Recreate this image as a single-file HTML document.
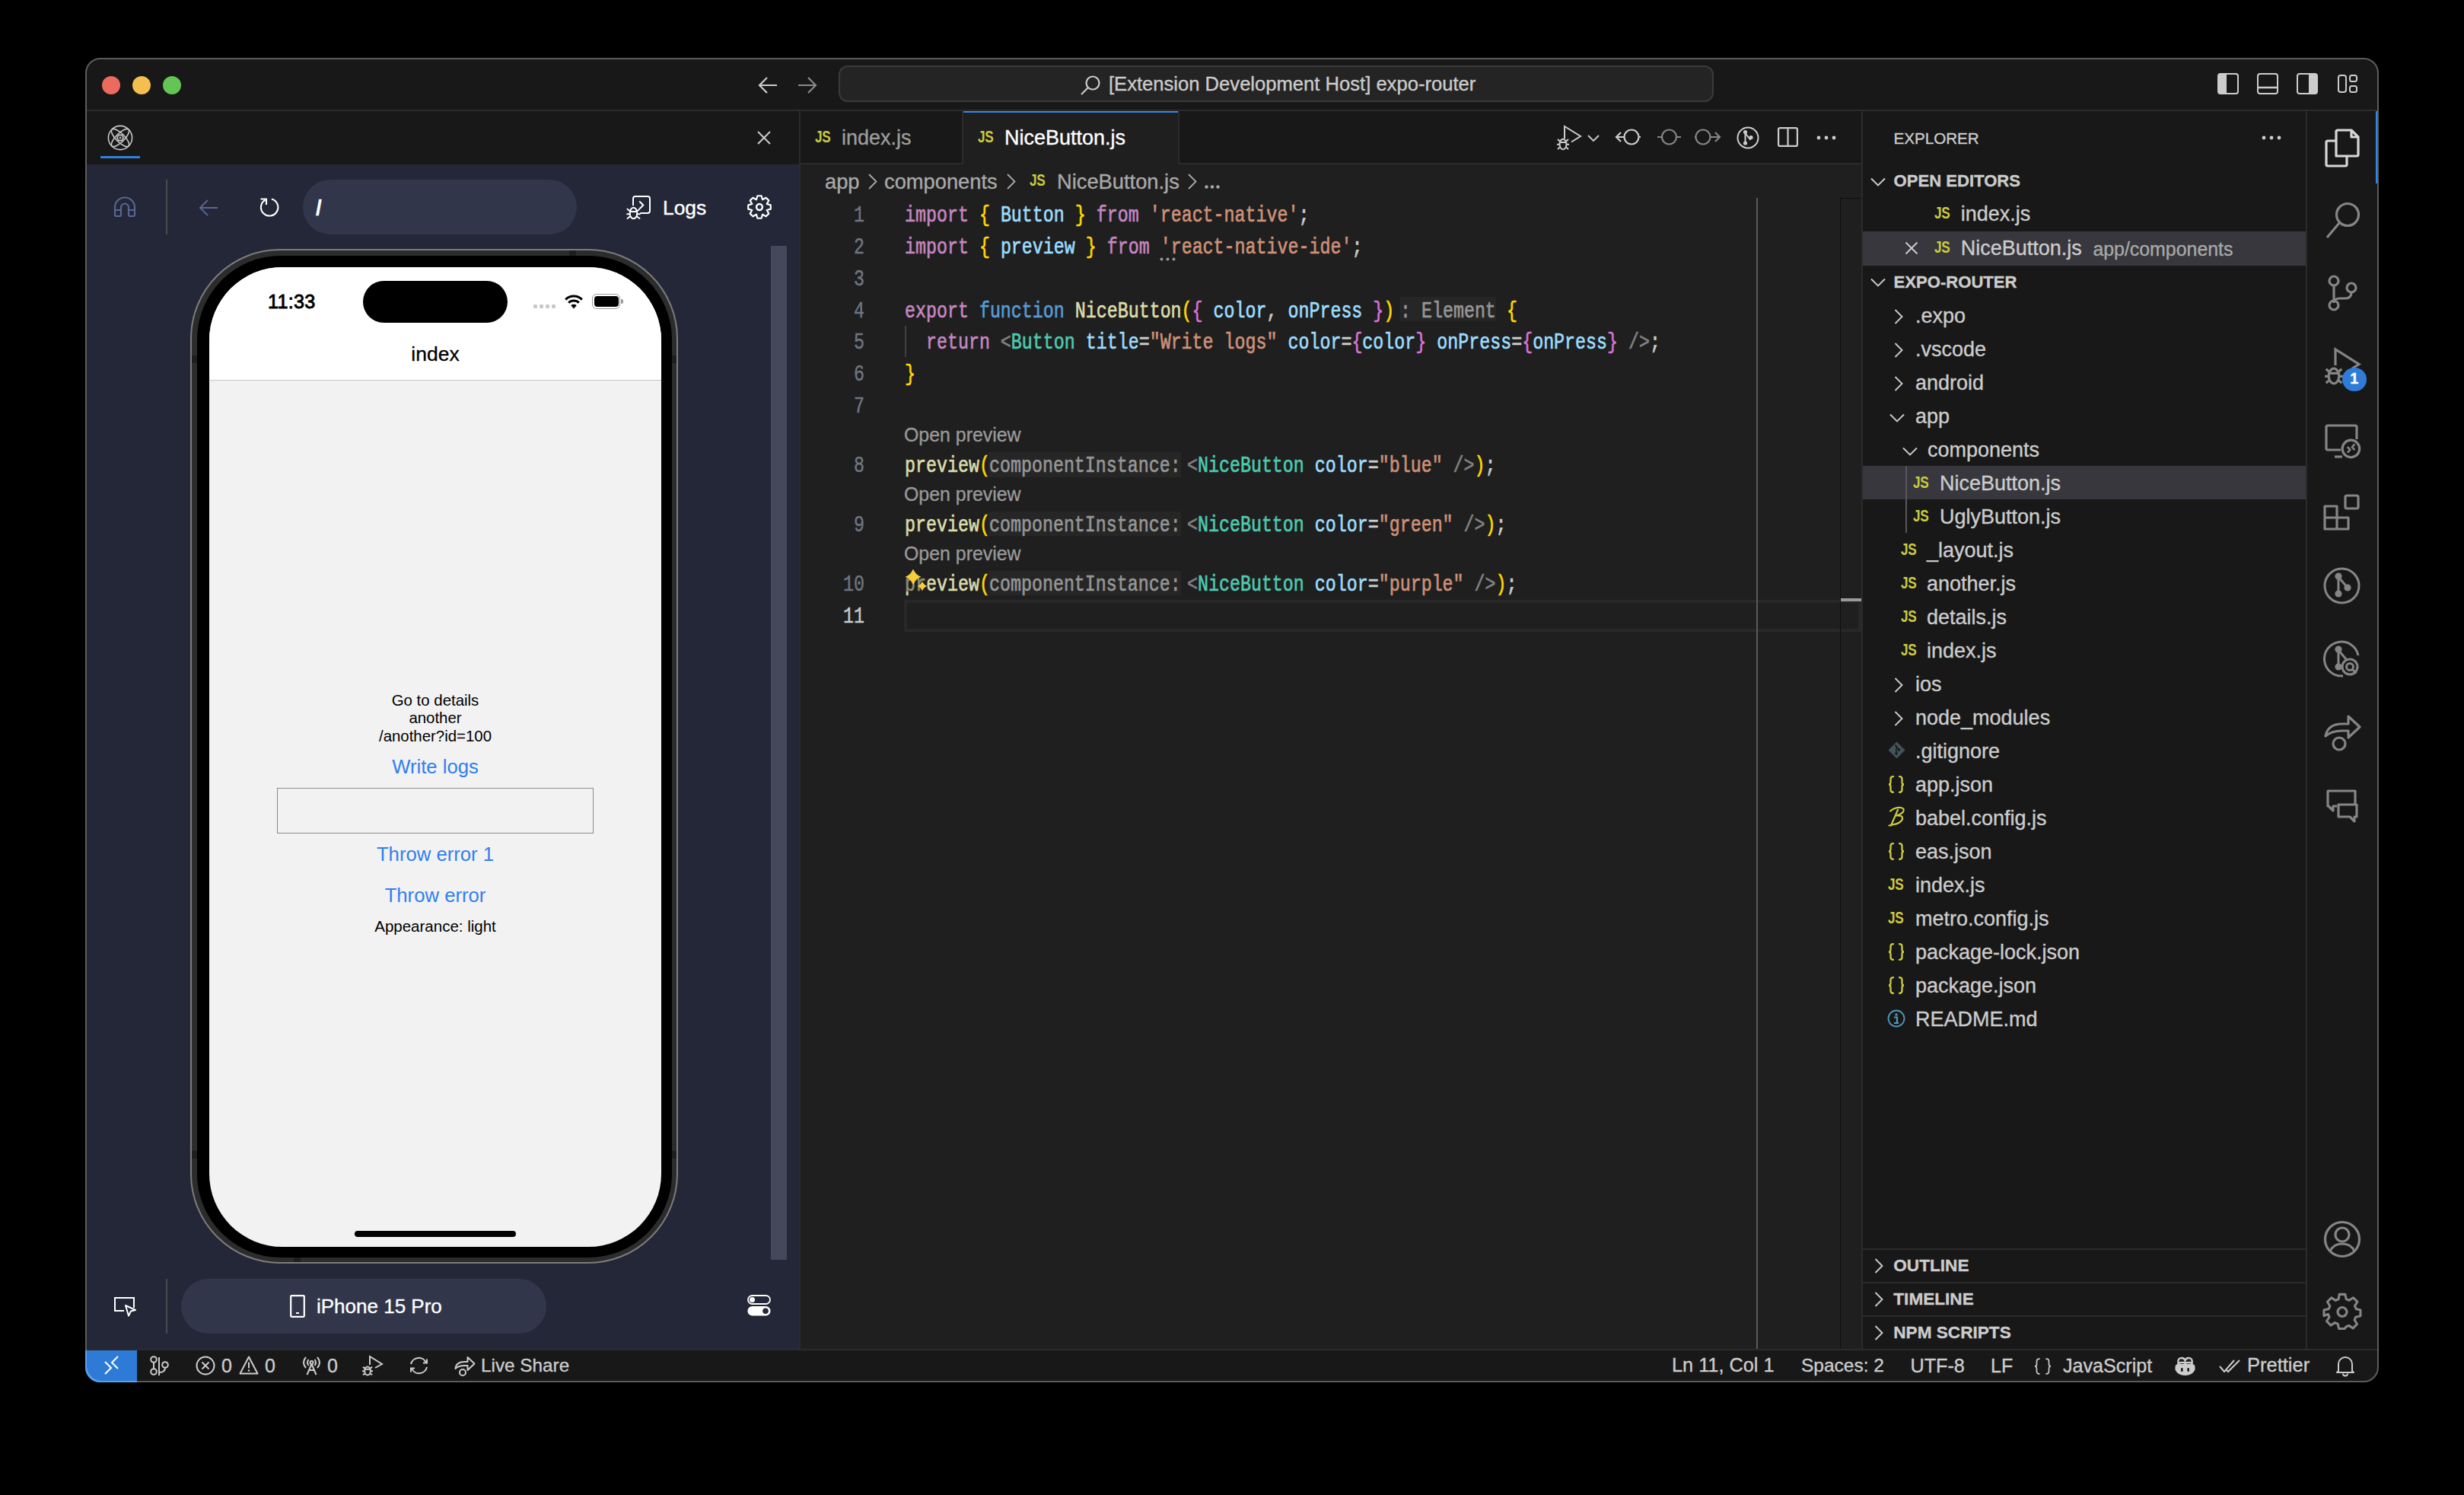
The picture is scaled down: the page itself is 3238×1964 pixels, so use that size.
<!DOCTYPE html>
<html><head><meta charset="utf-8">
<style>
html,body{margin:0;padding:0;}
body{width:3238px;height:1964px;background:#000;position:relative;overflow:hidden;font-family:"Liberation Sans",sans-serif;}
.a{position:absolute;}
.t{position:absolute;white-space:pre;line-height:1;-webkit-text-stroke:0.35px currentColor;}
#clip{position:absolute;left:0;top:0;width:3238px;height:1964px;clip-path:inset(76px 112px 148px 112px round 20px);}
svg{position:absolute;overflow:visible;}
.mono{font-family:"Liberation Mono",monospace;}
.code{position:absolute;left:1189px;white-space:pre;font-family:"Liberation Mono",monospace;font-size:30px;line-height:1;transform-origin:0 0;transform:scaleX(0.7767);-webkit-text-stroke:0.7px currentColor;}
.ln{position:absolute;width:100px;left:1036px;text-align:right;font-family:"Liberation Mono",monospace;font-size:30px;line-height:1;color:#6e7681;transform-origin:100% 0;transform:scaleX(0.7767);-webkit-text-stroke:0.5px currentColor;}
.kw{color:#c586c0}.br1{color:#ffd700}.br2{color:#da70d6}.vr{color:#9cdcfe}.st{color:#ce9178}.fn{color:#dcdcaa}.bl{color:#569cd6}.tg{color:#4ec9b0}.pu{color:#808080}.df{color:#cccccc}
.hint{background:#262626;color:#969696;}
.ex{position:absolute;font-size:25.5px;color:#cccccc;white-space:pre;line-height:1;}
.js{position:absolute;font-weight:700;color:#cbcb41;font-size:19px;letter-spacing:-0.5px;line-height:1;}
</style></head>
<body>
<div id="clip">
  <!-- window base -->
  <div class="a" style="left:112px;top:76px;width:3014px;height:1740px;background:#181818;"></div>
  <!-- title bar separator -->
  <div class="a" style="left:112px;top:144px;width:3014px;height:2px;background:#2b2b2b;"></div>
  <!-- traffic lights -->
  <div class="a" style="left:134px;top:100px;width:24px;height:24px;border-radius:50%;background:#ed6a5e;"></div>
  <div class="a" style="left:174px;top:100px;width:24px;height:24px;border-radius:50%;background:#f5bf4f;"></div>
  <div class="a" style="left:214px;top:100px;width:24px;height:24px;border-radius:50%;background:#62c554;"></div>
  <!-- nav arrows -->
  <svg style="left:996px;top:100px" width="26" height="24" viewBox="0 0 26 24"><path d="M25 12H2M12 2L2 12l10 10" fill="none" stroke="#cccccc" stroke-width="2.2"/></svg>
  <svg style="left:1048px;top:100px" width="26" height="24" viewBox="0 0 26 24"><path d="M1 12h23M14 2l10 10-10 10" fill="none" stroke="#8a8a8a" stroke-width="2.2"/></svg>
  <!-- search box -->
  <div class="a" style="left:1102px;top:86px;width:1150px;height:48px;box-sizing:border-box;border:2px solid #3a3a3a;border-radius:12px;background:#242424;"></div>
  <svg style="left:1420px;top:99px" width="26" height="26" viewBox="0 0 26 26"><circle cx="16" cy="10" r="8.5" fill="none" stroke="#cccccc" stroke-width="2.2"/><path d="M10 16L1 25" stroke="#cccccc" stroke-width="2.2"/></svg>
  <div class="t" style="left:1457px;top:98px;font-size:25.6px;color:#cccccc;">[Extension Development Host] expo-router</div>
  <!-- layout icons -->
  <svg style="left:2914px;top:96px" width="28" height="28" viewBox="0 0 28 28"><rect x="1" y="1" width="26" height="26" rx="3" fill="none" stroke="#cccccc" stroke-width="2"/><path d="M1 4a3 3 0 0 1 3-3h8v26H4a3 3 0 0 1-3-3z" fill="#cccccc"/></svg>
  <svg style="left:2966px;top:96px" width="28" height="28" viewBox="0 0 28 28"><rect x="1" y="1" width="26" height="26" rx="3" fill="none" stroke="#cccccc" stroke-width="2"/><path d="M1 19h26" stroke="#cccccc" stroke-width="2.4"/></svg>
  <svg style="left:3018px;top:96px" width="28" height="28" viewBox="0 0 28 28"><rect x="1" y="1" width="26" height="26" rx="3" fill="none" stroke="#cccccc" stroke-width="2"/><path d="M16 1h8a3 3 0 0 1 3 3v20a3 3 0 0 1-3 3h-8z" fill="#cccccc"/></svg>
  <svg style="left:3072px;top:98px" width="26" height="24" viewBox="0 0 26 24"><rect x="1" y="1" width="10" height="22" rx="3" fill="none" stroke="#cccccc" stroke-width="2"/><rect x="16" y="1" width="9" height="8" rx="2.5" fill="none" stroke="#cccccc" stroke-width="2"/><rect x="16" y="15" width="9" height="8" rx="2.5" fill="none" stroke="#cccccc" stroke-width="2"/></svg>

  <!-- ============ LEFT PANEL ============ -->
  <div id="leftpanel">
  <div class="a" style="left:112px;top:216px;width:938px;height:1556px;background:#242737;"></div>
  <div class="a" style="left:1050px;top:146px;width:2px;height:1626px;background:#2b2b2b;"></div>
  <!-- atom tab icon -->
  <svg style="left:141px;top:164px" width="34" height="34" viewBox="0 0 34 34"><g fill="none" stroke="#c8c8c8" stroke-width="1.6"><circle cx="17" cy="17" r="15.6"/><ellipse cx="17" cy="17" rx="15.4" ry="5.6" transform="rotate(45 17 17)"/><ellipse cx="17" cy="17" rx="15.4" ry="5.6" transform="rotate(-45 17 17)"/><path d="M21.20 17.00 L19.10 20.64 L14.90 20.64 L12.80 17.00 L14.90 13.36 L19.10 13.36Z"/></g><rect x="15.8" y="15.8" width="2.4" height="2.4" fill="#c8c8c8"/></svg>
  <div class="a" style="left:132px;top:205px;width:52px;height:2.5px;background:#2f7fde;"></div>
  <svg style="left:995px;top:172px" width="18" height="18" viewBox="0 0 18 18"><path d="M1 1l16 16M17 1L1 17" stroke="#cccccc" stroke-width="2"/></svg>
  <!-- toolbar -->
  <svg style="left:149px;top:258px" width="30" height="28" viewBox="0 0 30 28"><g fill="none" stroke="#5a6592" stroke-width="2.2" stroke-linejoin="round"><path d="M2 24V14.5a13 13 0 0 1 26 0V24q0 2-2 2h-4q-2 0-2-2V14.5a5 5 0 0 0-10 0V24q0 2-2 2H4q-2 0-2-2z"/><path d="M2 18h8M20 18h8"/></g></svg>
  <div class="a" style="left:218px;top:236px;width:2px;height:72px;background:#4a4a4c;"></div>
  <svg style="left:262px;top:262px" width="25" height="22" viewBox="0 0 25 22"><path d="M24 11H2M11 1L1 11l10 10" fill="none" stroke="#5a6592" stroke-width="2"/></svg>
  <svg style="left:340px;top:259px" width="28" height="27" viewBox="0 0 28 27"><g fill="none" stroke="#ffffff" stroke-width="2.1"><path d="M16.9 2.48A11.2 11.2 0 1 1 8.6 3.6"/><path d="M2.5 2.5H10V10"/></g></svg>
  <div class="a" style="left:398px;top:236px;width:360px;height:72px;border-radius:36px;background:#31364b;"></div>
  <div class="t" style="left:415px;top:259px;font-size:28px;color:#ffffff;font-weight:700;">/</div>
  <svg style="left:823px;top:256px" width="34" height="34" viewBox="0 0 34 34"><g fill="none" stroke="#ffffff" stroke-width="2" stroke-linecap="round"><path d="M9 13.5V5a3 3 0 0 1 3-3h16a3 3 0 0 1 3 3v16a3 3 0 0 1-3 3H19"/><path d="M17.8 9l4.5 4.5-4.5 4.5"/><ellipse cx="9.5" cy="24" rx="4.8" ry="7.3"/><path d="M5 22h9M1.5 18.7L4.8 21.2M16.8 19.3L14.3 21.2M1.2 25.2h3.6M14.2 25.2h3.6M1.5 31L4.8 28.5M17.5 31L14.2 28.5"/></g></svg>
  <div class="t" style="left:871px;top:260px;font-size:26.4px;color:#ffffff;font-weight:400;-webkit-text-stroke:0.4px #fff;">Logs</div>
  <svg style="left:981px;top:255px" width="34" height="34" viewBox="0 0 34 34"><g fill="none" stroke="#ffffff" stroke-width="2.2" stroke-linejoin="round"><path d="M14.40 2.23 L19.60 2.23 L21.02 7.30 L25.60 4.71 L29.29 8.40 L26.70 12.98 L31.77 14.40 L31.77 19.60 L26.70 21.02 L29.29 25.60 L25.60 29.29 L21.02 26.70 L19.60 31.77 L14.40 31.77 L12.98 26.70 L8.40 29.29 L4.71 25.60 L7.30 21.02 L2.23 19.60 L2.23 14.40 L7.30 12.98 L4.71 8.40 L8.40 4.71 L12.98 7.30Z"/><circle cx="17" cy="17" r="3.9" stroke-width="2.5"/></g></svg>
  <!-- scrollbar -->
  <div class="a" style="left:1013px;top:323px;width:21px;height:1332px;background:#45475a;"></div>
  <!-- phone -->
  <div class="a" style="left:250px;top:327px;width:641px;height:1333px;box-sizing:border-box;border-radius:118px;background:#2c2c2c;border:2px solid #7c7c7c;"></div>
  <div class="a" style="left:252px;top:467px;width:7px;height:10px;background:#1e1e1e;"></div>
  <div class="a" style="left:252px;top:1512px;width:7px;height:10px;background:#1e1e1e;"></div>
  <div class="a" style="left:883px;top:467px;width:6px;height:10px;background:#1e1e1e;"></div>
  <div class="a" style="left:883px;top:1512px;width:6px;height:10px;background:#1e1e1e;"></div>
  <div class="a" style="left:748px;top:329px;width:9px;height:7px;background:#1e1e1e;"></div>
  <div class="a" style="left:386px;top:1652px;width:9px;height:6px;background:#1e1e1e;"></div>
  <div class="a" style="left:259px;top:336px;width:624px;height:1316px;border-radius:110px;background:#000;"></div>
  <div class="a" style="left:275px;top:351px;width:594px;height:1287px;border-radius:96px;background:#f2f2f2;overflow:hidden;">
    <div class="a" style="left:0;top:0;width:594px;height:148px;background:#ffffff;border-bottom:1.5px solid #c6c6c6;"></div>
    <div class="a" style="left:202px;top:18px;width:190px;height:55px;border-radius:28px;background:#000;"></div>
    <div class="t" style="left:77px;top:33px;font-size:25.2px;font-weight:400;color:#000;-webkit-text-stroke:0.9px #000;letter-spacing:0.3px;">11:33</div>
    <div class="a" style="left:426px;top:49px;width:5px;height:5px;border-radius:1.5px;background:#c8c8c8;"></div>
    <div class="a" style="left:434px;top:49px;width:5px;height:5px;border-radius:1.5px;background:#c8c8c8;"></div>
    <div class="a" style="left:442px;top:49px;width:5px;height:5px;border-radius:1.5px;background:#c8c8c8;"></div>
    <div class="a" style="left:450px;top:49px;width:5px;height:5px;border-radius:1.5px;background:#c8c8c8;"></div>
    <svg style="left:466px;top:35px" width="26" height="20" viewBox="0 0 26 20"><path d="M13 19.5l-3.7-4.3a5.5 5.5 0 0 1 7.4 0z" fill="#000"/><path d="M6.2 11.8a9.5 9.5 0 0 1 13.6 0M2.2 7.6a15 15 0 0 1 21.6 0" fill="none" stroke="#000" stroke-width="3"/></svg>
    <div class="a" style="left:503px;top:35px;width:37px;height:20px;box-sizing:border-box;border:1.5px solid #9a9a9a;border-radius:6px;"></div>
    <div class="a" style="left:506px;top:38px;width:32px;height:14px;border-radius:4px;background:#000;"></div>
    <div class="a" style="left:541px;top:42px;width:3px;height:6px;border-radius:0 2px 2px 0;background:#9a9a9a;"></div>
    <div class="t" style="left:0;width:594px;text-align:center;top:101px;font-size:26.5px;color:#000;-webkit-text-stroke:0.3px #000;">index</div>
    <div class="t" style="left:0;width:594px;text-align:center;top:558px;font-size:20.4px;-webkit-text-stroke:0;color:#000;line-height:23.4px;">Go to details
another
/another?id=100</div>
    <div class="t" style="left:0;width:594px;text-align:center;top:644px;font-size:25.7px;-webkit-text-stroke:0;color:#2f7ff0;">Write logs</div>
    <div class="a" style="left:89px;top:684px;width:416px;height:60px;box-sizing:border-box;border:1.5px solid #8c8c8c;"></div>
    <div class="t" style="left:0;width:594px;text-align:center;top:759px;font-size:25.7px;-webkit-text-stroke:0;color:#2f7ff0;">Throw error 1</div>
    <div class="t" style="left:0;width:594px;text-align:center;top:813px;font-size:25.7px;-webkit-text-stroke:0;color:#2f7ff0;">Throw error</div>
    <div class="t" style="left:0;width:594px;text-align:center;top:856px;font-size:20.5px;-webkit-text-stroke:0;color:#000;">Appearance: light</div>
    <div class="a" style="left:191px;top:1266px;width:212px;height:8px;border-radius:4px;background:#000;"></div>
  </div>
  <!-- bottom toolbar -->
  <svg style="left:149px;top:1703px" width="32" height="29" viewBox="0 0 32 29"><g fill="none" stroke="#ffffff" stroke-width="2"><path d="M14 19H2V2h25v13"/><path d="M16 12l13 6-6 1.5-3 6z" stroke-linejoin="round"/></g></svg>
  <div class="a" style="left:218px;top:1680px;width:2px;height:72px;background:#4a4a4c;"></div>
  <div class="a" style="left:238px;top:1680px;width:480px;height:72px;border-radius:36px;background:#31364b;"></div>
  <svg style="left:381px;top:1701px" width="20" height="30" viewBox="0 0 20 30"><rect x="1.2" y="1.2" width="17.6" height="27.6" rx="1" fill="none" stroke="#ffffff" stroke-width="2.2"/><path d="M8 24h4" stroke="#fff" stroke-width="2"/></svg>
  <div class="t" style="left:416px;top:1703px;font-size:26px;color:#ffffff;">iPhone 15 Pro</div>
  <svg style="left:982px;top:1701px" width="31" height="28" viewBox="0 0 31 28"><rect x="1" y="1" width="29" height="11" rx="5.5" fill="none" stroke="#fff" stroke-width="1.8"/><circle cx="6.5" cy="6.5" r="3.5" fill="#fff"/><rect x="0.5" y="15" width="30" height="12.5" rx="6.2" fill="#fff"/><circle cx="24" cy="21.2" r="3.8" fill="#242737"/></svg>
  </div>

  <!-- ============ EDITOR ============ -->
  <div id="editor">
  <div class="a" style="left:1052px;top:215px;width:1395px;height:1557px;background:#1f1f1f;"></div>
  <div class="a" style="left:1052px;top:214px;width:1395px;height:2px;background:#2b2b2b;"></div>
  <div class="a" style="left:2446px;top:146px;width:2px;height:1626px;background:#2b2b2b;"></div>
  <!-- tabs -->
  <div class="a" style="left:1264px;top:146px;width:2px;height:69px;background:#2b2b2b;"></div>
  <div class="a" style="left:1266px;top:146px;height:70px;background:#1f1f1f;width:282px;"></div>
  <div class="a" style="left:1266px;top:146px;width:282px;height:2px;background:#3388e6;"></div>
  <div class="a" style="left:1548px;top:146px;width:2px;height:69px;background:#2b2b2b;"></div>
  <div class="js" style="left:1071px;top:169.7px;font-size:21.5px;transform:scaleX(0.8);transform-origin:0 0;">JS</div>
  <div class="t" style="left:1106px;top:167.6px;font-size:27px;color:#9d9d9d;">index.js</div>
  <div class="js" style="left:1285px;top:169.7px;font-size:21.5px;transform:scaleX(0.8);transform-origin:0 0;">JS</div>
  <div class="t" style="left:1320px;top:167.6px;font-size:27px;color:#ffffff;">NiceButton.js</div>
  <!-- editor actions -->
  <svg style="left:2045px;top:165px" width="34" height="33" viewBox="0 0 34 33"><g fill="none" stroke="#cccccc" stroke-width="2"><path d="M11 17V1l21 13-12 7.5"/><ellipse cx="9" cy="24.5" rx="4.5" ry="6.8"/><path d="M4.5 21.916h9.0M1.98 18.04L4.8 20.42M16.02 18.04L13.2 20.42M0.8999999999999999 24.8h3.6M13.5 24.8h3.6M1.98 30.96L4.8 28.58M16.02 30.96L13.2 28.58"/></g></svg>
  <svg style="left:2086px;top:177px" width="16" height="10" viewBox="0 0 16 10"><path d="M1 1l7 7 7-7" fill="none" stroke="#cccccc" stroke-width="1.8"/></svg>
  <svg style="left:2123px;top:169px" width="34" height="22" viewBox="0 0 34 22"><g fill="none" stroke="#cccccc" stroke-width="2.2"><circle cx="21" cy="11" r="9.5"/><path d="M11.5 11H1M7 5l-6 6 6 6M30.5 11H33"/></g></svg>
  <svg style="left:2178px;top:169px" width="31" height="22" viewBox="0 0 31 22"><g fill="none" stroke="#858585" stroke-width="2.2"><circle cx="15.5" cy="11" r="9.5"/><path d="M0 11h6M25 11h6"/></g></svg>
  <svg style="left:2227px;top:169px" width="34" height="22" viewBox="0 0 34 22"><g fill="none" stroke="#858585" stroke-width="2.2"><circle cx="11" cy="11" r="9.5"/><path d="M20.5 11H32M27 5l6 6-6 6M0 11h1.5"/></g></svg>
  <svg style="left:2282px;top:166px" width="30" height="30" viewBox="0 0 30 30"><g fill="none" stroke="#cccccc" stroke-width="2"><circle cx="15" cy="15" r="13.5"/><path d="M11.5 8v14M11.5 9l7 9"/></g><circle cx="11.5" cy="7.5" r="2.6" fill="#cccccc"/><circle cx="11.5" cy="22" r="2.6" fill="#cccccc"/><circle cx="19" cy="14.5" r="2.6" fill="#cccccc"/></svg>
  <svg style="left:2336px;top:167px" width="27" height="26" viewBox="0 0 27 26"><g fill="none" stroke="#cccccc" stroke-width="2.2"><rect x="1.1" y="1.1" width="24.8" height="23.8" rx="2"/><path d="M13.5 1v24"/></g></svg>
  <svg style="left:2387px;top:178px" width="26" height="6" viewBox="0 0 26 6"><g fill="#cccccc"><circle cx="3" cy="3" r="2.4"/><circle cx="13" cy="3" r="2.4"/><circle cx="23" cy="3" r="2.4"/></g></svg>
  <!-- breadcrumbs -->
  <div class="t" style="left:1084px;top:225px;font-size:27.3px;color:#a9a9a9;">app</div>
  <svg style="left:1141px;top:228px" width="12" height="21" viewBox="0 0 12 21"><path d="M1 1l9.5 9.5L1 20" fill="none" stroke="#a9a9a9" stroke-width="1.8"/></svg>
  <div class="t" style="left:1162px;top:225px;font-size:27.3px;color:#a9a9a9;">components</div>
  <svg style="left:1323px;top:228px" width="12" height="21" viewBox="0 0 12 21"><path d="M1 1l9.5 9.5L1 20" fill="none" stroke="#a9a9a9" stroke-width="1.8"/></svg>
  <div class="js" style="left:1353px;top:227px;font-size:21.5px;transform:scaleX(0.8);transform-origin:0 0;">JS</div>
  <div class="t" style="left:1389px;top:225px;font-size:27.3px;color:#a9a9a9;">NiceButton.js</div>
  <svg style="left:1561px;top:228px" width="12" height="21" viewBox="0 0 12 21"><path d="M1 1l9.5 9.5L1 20" fill="none" stroke="#a9a9a9" stroke-width="1.8"/></svg>
  <svg style="left:1583px;top:243px" width="20" height="5" viewBox="0 0 20 5"><g fill="#a9a9a9"><circle cx="2.5" cy="2.5" r="2.2"/><circle cx="10" cy="2.5" r="2.2"/><circle cx="17.5" cy="2.5" r="2.2"/></g></svg>
  <!-- ruler & minimap border -->
  <!-- current line -->
  <div class="a" style="left:1188px;top:788px;width:1258px;height:42px;box-sizing:border-box;border:4px solid #282828;"></div>
  <div class="a" style="left:2308px;top:260px;width:2px;height:1512px;background:#5a5a5a;"></div>
  <div class="a" style="left:2418px;top:260px;width:28px;height:1512px;border-left:1.5px solid #0e0e0e;border-top:1.5px solid #0e0e0e;box-sizing:border-box;"></div>
  <div class="a" style="left:2419px;top:786px;width:27px;height:4px;background:#9a9a9a;"></div>
  <!-- indent guide -->
  <div class="a" style="left:1189px;top:428px;width:2px;height:41px;background:#404040;"></div>
  <!-- line numbers -->
  <div class="ln" style="top:268.4px">1</div>
  <div class="ln" style="top:310.1px">2</div>
  <div class="ln" style="top:351.9px">3</div>
  <div class="ln" style="top:393.6px">4</div>
  <div class="ln" style="top:435.4px">5</div>
  <div class="ln" style="top:477.2px">6</div>
  <div class="ln" style="top:518.9px">7</div>
  <div class="ln" style="top:597.2px">8</div>
  <div class="ln" style="top:674.8px">9</div>
  <div class="ln" style="top:752.9px">10</div>
  <div class="ln" style="top:794.9px;color:#cccccc">11</div>
  <!-- code -->
  <div class="code" style="top:268.4px"><span class="kw">import</span> <span class="br1">{</span> <span class="vr">Button</span> <span class="br1">}</span> <span class="kw">from</span> <span class="st">'react-native'</span><span class="df">;</span></div>
  <div class="code" style="top:310.1px"><span class="kw">import</span> <span class="br1">{</span> <span class="vr">preview</span> <span class="br1">}</span> <span class="kw">from</span> <span class="st">'react-native-ide'</span><span class="df">;</span></div>
  <svg style="left:1524px;top:338px" width="21" height="5" viewBox="0 0 21 5"><g fill="#9a9a9a"><circle cx="2.5" cy="2.5" r="2"/><circle cx="10.5" cy="2.5" r="2"/><circle cx="18.5" cy="2.5" r="2"/></g></svg>
  <div class="code" style="top:393.6px"><span class="kw">export</span> <span class="bl">function</span> <span class="fn">NiceButton</span><span class="br1">(</span><span class="br2">{</span> <span class="vr">color</span><span class="df">,</span> <span class="vr">onPress</span> <span class="br2">}</span><span class="br1">)</span></div>
  <div class="a hint" style="left:1840px;top:390px;width:126px;height:32px;"></div>
  <div class="code" style="left:1840px;top:393.6px;color:#969696">: Element</div>
  <div class="code" style="left:1966px;top:393.6px"> <span class="br1">{</span></div>
  <div class="code" style="top:435.4px">  <span class="kw">return</span> <span class="pu">&lt;</span><span class="tg">Button</span> <span class="vr">title</span><span class="df">=</span><span class="st">"Write logs"</span> <span class="vr">color</span><span class="df">=</span><span class="br2">{</span><span class="vr">color</span><span class="br2">}</span> <span class="vr">onPress</span><span class="df">=</span><span class="br2">{</span><span class="vr">onPress</span><span class="br2">}</span> <span class="pu">/&gt;</span><span class="df">;</span></div>
  <div class="code" style="top:477.2px"><span class="br1">}</span></div>
  <div class="t" style="left:1188px;top:559px;font-size:24.9px;color:#999999;">Open preview</div>
  <div class="t" style="left:1188px;top:637.4px;font-size:24.9px;color:#999999;">Open preview</div>
  <div class="t" style="left:1188px;top:715.3px;font-size:24.9px;color:#999999;">Open preview</div>
  <div class="a hint" style="left:1299px;top:594px;width:253px;height:32.5px;"></div>
  <div class="a hint" style="left:1299px;top:671.6px;width:253px;height:32.5px;"></div>
  <div class="a hint" style="left:1299px;top:749.7px;width:253px;height:32.5px;"></div>
  <div class="code" style="top:597.2px"><span class="fn">preview</span><span class="br1">(</span></div>
  <div class="code" style="left:1300px;top:597.2px;color:#969696">componentInstance:</div>
  <div class="code" style="left:1560px;top:597.2px"><span class="pu">&lt;</span><span class="tg">NiceButton</span> <span class="vr">color</span><span class="df">=</span><span class="st">"blue"</span> <span class="pu">/&gt;</span><span class="br1">)</span><span class="df">;</span></div>
  <div class="code" style="top:674.8px"><span class="fn">preview</span><span class="br1">(</span></div>
  <div class="code" style="left:1300px;top:674.8px;color:#969696">componentInstance:</div>
  <div class="code" style="left:1560px;top:674.8px"><span class="pu">&lt;</span><span class="tg">NiceButton</span> <span class="vr">color</span><span class="df">=</span><span class="st">"green"</span> <span class="pu">/&gt;</span><span class="br1">)</span><span class="df">;</span></div>
  <div class="code" style="top:752.9px"><span class="fn">preview</span><span class="br1">(</span></div>
  <div class="code" style="left:1300px;top:752.9px;color:#969696">componentInstance:</div>
  <div class="code" style="left:1560px;top:752.9px"><span class="pu">&lt;</span><span class="tg">NiceButton</span> <span class="vr">color</span><span class="df">=</span><span class="st">"purple"</span> <span class="pu">/&gt;</span><span class="br1">)</span><span class="df">;</span></div>
  <div class="a" style="left:1189px;top:747px;width:30px;height:30px;background:rgba(31,31,31,0.42);"></div><svg style="left:1189px;top:747px" width="31" height="31" viewBox="0 0 31 31"><path d="M11 0.40000000000000036C14.744 7.056000000000001 14.744 7.056000000000001 21.4 10.8C14.744 14.544 14.744 14.544 11 21.200000000000003C7.256 14.544 7.256 14.544 0.5999999999999996 10.8C7.256 7.056000000000001 7.256 7.056000000000001 11 0.40000000000000036Z" fill="#f6cd3a"/><path d="M23 16.8C25.232 20.768 25.232 20.768 29.2 23C25.232 25.232 25.232 25.232 23 29.2C20.768 25.232 20.768 25.232 16.8 23C20.768 20.768 20.768 20.768 23 16.8Z" fill="#f6cd3a"/></svg>
  </div>

  <!-- ============ SIDEBAR ============ -->
  <div id="sidebar">
  <div class="a" style="left:2448px;top:146px;width:582px;height:1626px;background:#181818;"></div>
  <div class="t" style="left:2488.5px;top:171.5px;font-size:20.6px;color:#cccccc;">EXPLORER</div>
  <svg style="left:2972px;top:178px" width="26" height="6" viewBox="0 0 26 6"><g fill="#cccccc"><circle cx="3" cy="3" r="2.4"/><circle cx="13" cy="3" r="2.4"/><circle cx="23" cy="3" r="2.4"/></g></svg>
  <svg style="left:2458px;top:233px" width="20" height="12" viewBox="0 0 20 12"><path d="M1 1.5l9 9 9-9" fill="none" stroke="#cccccc" stroke-width="1.9"/></svg>
  <div class="t" style="left:2488.5px;top:227.4px;font-size:22.1px;color:#cccccc;font-weight:700;">OPEN EDITORS</div>
  <div class="js" style="left:2541.8px;top:269.7px;font-size:21.5px;transform:scaleX(0.8);transform-origin:0 0;">JS</div>
  <div class="t" style="left:2576.8px;top:268.2px;font-size:27px;color:#cccccc;">index.js</div>
  <div class="a" style="left:2448px;top:304px;width:582px;height:45px;background:#37373d;"></div>
  <svg style="left:2503px;top:318px" width="18" height="16" viewBox="0 0 18 16"><path d="M1.5 0.5l15 15M16.5 0.5l-15 15" stroke="#cccccc" stroke-width="1.9"/></svg>
  <div class="js" style="left:2541.8px;top:314.7px;font-size:21.5px;transform:scaleX(0.8);transform-origin:0 0;">JS</div>
  <div class="t" style="left:2576.8px;top:313.4px;font-size:27px;color:#cccccc;">NiceButton.js</div>
  <div class="t" style="left:2750.4px;top:315.1px;font-size:24.9px;color:#a8a8a8;">app/components</div>
  <svg style="left:2458px;top:365px" width="20" height="12" viewBox="0 0 20 12"><path d="M1 1.5l9 9 9-9" fill="none" stroke="#cccccc" stroke-width="1.9"/></svg>
  <div class="t" style="left:2488.5px;top:360.1px;font-size:22.1px;color:#cccccc;font-weight:700;">EXPO-ROUTER</div>
  <div class="a" style="left:2448px;top:612px;width:582px;height:43.5px;background:#37373d;"></div>
  <div class="a" style="left:2504px;top:612px;width:2px;height:88px;background:#585858;"></div>
  <svg style="left:2489px;top:406.2px" width="12" height="20" viewBox="0 0 12 20"><path d="M1.5 1l9 9-9 9" fill="none" stroke="#cccccc" stroke-width="1.9"/></svg>
  <div class="t" style="left:2517px;top:402.2px;font-size:27px;color:#cccccc;">.expo</div>
  <svg style="left:2489px;top:450.2px" width="12" height="20" viewBox="0 0 12 20"><path d="M1.5 1l9 9-9 9" fill="none" stroke="#cccccc" stroke-width="1.9"/></svg>
  <div class="t" style="left:2517px;top:446.2px;font-size:27px;color:#cccccc;">.vscode</div>
  <svg style="left:2489px;top:494.2px" width="12" height="20" viewBox="0 0 12 20"><path d="M1.5 1l9 9-9 9" fill="none" stroke="#cccccc" stroke-width="1.9"/></svg>
  <div class="t" style="left:2517px;top:490.2px;font-size:27px;color:#cccccc;">android</div>
  <svg style="left:2483px;top:543.1px" width="20" height="12" viewBox="0 0 20 12"><path d="M1 1.5l9 9 9-9" fill="none" stroke="#cccccc" stroke-width="1.9"/></svg>
  <div class="t" style="left:2517px;top:534.2px;font-size:27px;color:#cccccc;">app</div>
  <svg style="left:2500px;top:587.1px" width="20" height="12" viewBox="0 0 20 12"><path d="M1 1.5l9 9 9-9" fill="none" stroke="#cccccc" stroke-width="1.9"/></svg>
  <div class="t" style="left:2533px;top:578.2px;font-size:27px;color:#cccccc;">components</div>
  <div class="js" style="left:2513.5px;top:623.8px;font-size:21.5px;transform:scaleX(0.8);transform-origin:0 0;">JS</div>
  <div class="t" style="left:2549px;top:622.1px;font-size:27px;color:#cccccc;">NiceButton.js</div>
  <div class="js" style="left:2513.5px;top:667.8px;font-size:21.5px;transform:scaleX(0.8);transform-origin:0 0;">JS</div>
  <div class="t" style="left:2549px;top:666.1px;font-size:27px;color:#cccccc;">UglyButton.js</div>
  <div class="js" style="left:2497.6px;top:711.8px;font-size:21.5px;transform:scaleX(0.8);transform-origin:0 0;">JS</div>
  <div class="t" style="left:2532px;top:710.1px;font-size:27px;color:#cccccc;">_layout.js</div>
  <div class="js" style="left:2497.6px;top:755.7px;font-size:21.5px;transform:scaleX(0.8);transform-origin:0 0;">JS</div>
  <div class="t" style="left:2532px;top:754.1px;font-size:27px;color:#cccccc;">another.js</div>
  <div class="js" style="left:2497.6px;top:799.7px;font-size:21.5px;transform:scaleX(0.8);transform-origin:0 0;">JS</div>
  <div class="t" style="left:2532px;top:798.1px;font-size:27px;color:#cccccc;">details.js</div>
  <div class="js" style="left:2497.6px;top:843.7px;font-size:21.5px;transform:scaleX(0.8);transform-origin:0 0;">JS</div>
  <div class="t" style="left:2532px;top:842.0px;font-size:27px;color:#cccccc;">index.js</div>
  <svg style="left:2489px;top:890.0px" width="12" height="20" viewBox="0 0 12 20"><path d="M1.5 1l9 9-9 9" fill="none" stroke="#cccccc" stroke-width="1.9"/></svg>
  <div class="t" style="left:2517px;top:886.0px;font-size:27px;color:#cccccc;">ios</div>
  <svg style="left:2489px;top:934.0px" width="12" height="20" viewBox="0 0 12 20"><path d="M1.5 1l9 9-9 9" fill="none" stroke="#cccccc" stroke-width="1.9"/></svg>
  <div class="t" style="left:2517px;top:930.0px;font-size:27px;color:#cccccc;">node_modules</div>
  <svg style="left:2480.5px;top:974.4px" width="23" height="23" viewBox="0 0 23 23"><path d="M11.5 0.5L22.5 11.5 11.5 22.5 0.5 11.5z" fill="#41535b"/><g stroke="#181818" stroke-width="1.5" fill="none"><path d="M9.5 4.5l5 6.5M11 7v9"/></g><circle cx="11" cy="16" r="1.8" fill="#181818"/><circle cx="14.5" cy="11" r="1.8" fill="#181818"/></svg>
  <div class="t" style="left:2517px;top:974.0px;font-size:27px;color:#cccccc;">.gitignore</div>
  <svg style="left:2480.5px;top:1019.4px" width="22" height="23" viewBox="0 0 22 23"><g fill="none" stroke="#cbcb41" stroke-width="2.3" stroke-linecap="round"><path d="M7 1.2Q3.5 1.2 3.5 4.5V8.5Q3.5 11.5 1 11.5Q3.5 11.5 3.5 14.5V18.5Q3.5 21.8 7 21.8"/><path d="M15 1.2Q18.5 1.2 18.5 4.5V8.5Q18.5 11.5 21 11.5Q18.5 11.5 18.5 14.5V18.5Q18.5 21.8 15 21.8"/></g></svg>
  <div class="t" style="left:2517px;top:1018.0px;font-size:27px;color:#cccccc;">app.json</div>
  <svg style="left:2480.5px;top:1059.4px" width="23" height="27" viewBox="0 0 23 27"><g fill="none" stroke="#cbcb41" stroke-width="2.2" stroke-linecap="round" stroke-linejoin="round"><path d="M3 6.5Q9 1.5 17 2Q22.5 3 20 7.5Q17 11 11 12.5Q20 11.5 19 17Q17 22.5 6 24.5L1.5 25.5"/><path d="M13 5L4 25.5"/></g></svg>
  <div class="t" style="left:2517px;top:1061.9px;font-size:27px;color:#cccccc;">babel.config.js</div>
  <svg style="left:2480.5px;top:1107.4px" width="22" height="23" viewBox="0 0 22 23"><g fill="none" stroke="#cbcb41" stroke-width="2.3" stroke-linecap="round"><path d="M7 1.2Q3.5 1.2 3.5 4.5V8.5Q3.5 11.5 1 11.5Q3.5 11.5 3.5 14.5V18.5Q3.5 21.8 7 21.8"/><path d="M15 1.2Q18.5 1.2 18.5 4.5V8.5Q18.5 11.5 21 11.5Q18.5 11.5 18.5 14.5V18.5Q18.5 21.8 15 21.8"/></g></svg>
  <div class="t" style="left:2517px;top:1105.9px;font-size:27px;color:#cccccc;">eas.json</div>
  <div class="js" style="left:2481px;top:1151.6px;font-size:21.5px;transform:scaleX(0.8);transform-origin:0 0;">JS</div>
  <div class="t" style="left:2517px;top:1149.9px;font-size:27px;color:#cccccc;">index.js</div>
  <div class="js" style="left:2481px;top:1195.5px;font-size:21.5px;transform:scaleX(0.8);transform-origin:0 0;">JS</div>
  <div class="t" style="left:2517px;top:1193.9px;font-size:27px;color:#cccccc;">metro.config.js</div>
  <svg style="left:2480.5px;top:1239.3px" width="22" height="23" viewBox="0 0 22 23"><g fill="none" stroke="#cbcb41" stroke-width="2.3" stroke-linecap="round"><path d="M7 1.2Q3.5 1.2 3.5 4.5V8.5Q3.5 11.5 1 11.5Q3.5 11.5 3.5 14.5V18.5Q3.5 21.8 7 21.8"/><path d="M15 1.2Q18.5 1.2 18.5 4.5V8.5Q18.5 11.5 21 11.5Q18.5 11.5 18.5 14.5V18.5Q18.5 21.8 15 21.8"/></g></svg>
  <div class="t" style="left:2517px;top:1237.9px;font-size:27px;color:#cccccc;">package-lock.json</div>
  <svg style="left:2480.5px;top:1283.3px" width="22" height="23" viewBox="0 0 22 23"><g fill="none" stroke="#cbcb41" stroke-width="2.3" stroke-linecap="round"><path d="M7 1.2Q3.5 1.2 3.5 4.5V8.5Q3.5 11.5 1 11.5Q3.5 11.5 3.5 14.5V18.5Q3.5 21.8 7 21.8"/><path d="M15 1.2Q18.5 1.2 18.5 4.5V8.5Q18.5 11.5 21 11.5Q18.5 11.5 18.5 14.5V18.5Q18.5 21.8 15 21.8"/></g></svg>
  <div class="t" style="left:2517px;top:1281.8px;font-size:27px;color:#cccccc;">package.json</div>
  <svg style="left:2480px;top:1325.8px" width="24" height="24" viewBox="0 0 24 24"><circle cx="12" cy="12" r="10.5" fill="none" stroke="#519aba" stroke-width="1.8"/><circle cx="12" cy="7" r="1.7" fill="#519aba"/><path d="M9 10.5h4v7.5M9 18h6" stroke="#519aba" stroke-width="2.2" fill="none"/></svg>
  <div class="t" style="left:2517px;top:1325.8px;font-size:27px;color:#cccccc;">README.md</div>
  <div class="a" style="left:2448px;top:1640px;width:582px;height:2px;background:#2b2b2b;"></div>
  <svg style="left:2463px;top:1653px" width="12" height="20" viewBox="0 0 12 20"><path d="M1.5 1l9 9-9 9" fill="none" stroke="#cccccc" stroke-width="1.9"/></svg>
  <div class="t" style="left:2488.3px;top:1651.8px;font-size:22.6px;color:#cccccc;font-weight:700;">OUTLINE</div>
  <div class="a" style="left:2448px;top:1684px;width:582px;height:2px;background:#2b2b2b;"></div>
  <svg style="left:2463px;top:1697px" width="12" height="20" viewBox="0 0 12 20"><path d="M1.5 1l9 9-9 9" fill="none" stroke="#cccccc" stroke-width="1.9"/></svg>
  <div class="t" style="left:2488.3px;top:1695.8px;font-size:22.6px;color:#cccccc;font-weight:700;">TIMELINE</div>
  <div class="a" style="left:2448px;top:1728px;width:582px;height:2px;background:#2b2b2b;"></div>
  <svg style="left:2463px;top:1741px" width="12" height="20" viewBox="0 0 12 20"><path d="M1.5 1l9 9-9 9" fill="none" stroke="#cccccc" stroke-width="1.9"/></svg>
  <div class="t" style="left:2488.3px;top:1739.8px;font-size:22.6px;color:#cccccc;font-weight:700;">NPM SCRIPTS</div>
  </div>

  <!-- ============ ACTIVITY BAR ============ -->
  <div id="activity">
  <div class="a" style="left:3032px;top:146px;width:93px;height:1626px;background:#181818;"></div>
  <div class="a" style="left:3030px;top:146px;width:2px;height:1626px;background:#2b2b2b;"></div>
  <div class="a" style="left:3122px;top:146px;width:3px;height:95px;background:#3388e6;"></div>
  <svg style="left:3055px;top:169px" width="46" height="51" viewBox="0 0 46 51"><g fill="none" stroke="#d7d7d7" stroke-width="3.2" stroke-linejoin="round"><path d="M15 36V4q0-2 2-2h18l9 9v23q0 2-2 2z"/><path d="M35 2v9h9"/><path d="M15 16H4q-2 0-2 2v29q0 2 2 2h23q2 0 2-2V36"/></g></svg>
  <svg style="left:3056px;top:265px" width="46" height="49" viewBox="0 0 46 49"><g fill="none" stroke="#858585" stroke-width="3.2"><circle cx="29" cy="17" r="14.5"/><path d="M18.5 27.5L2 47"/></g></svg>
  <svg style="left:3059px;top:361px" width="39" height="49" viewBox="0 0 39 49"><g fill="none" stroke="#858585" stroke-width="3.2"><circle cx="8" cy="8" r="6"/><circle cx="8" cy="40" r="6"/><circle cx="31" cy="17" r="6"/><path d="M8 14v20M31 23q0 8-8 8H16q-8 0-8 6"/></g></svg>
  <svg style="left:3052px;top:457px" width="50" height="50" viewBox="0 0 50 50"><g fill="none" stroke="#858585" stroke-width="3.2" stroke-linecap="butt"><path d="M17 23V2l31 19.5-9 5.5"/><ellipse cx="15" cy="37" rx="6.8" ry="9.8"/><path d="M8.2 33.275999999999996h13.6M4.699999999999999 27.689999999999998L8.5 31.12M25.3 27.689999999999998L21.5 31.12M3.1999999999999993 37.3h5M21.8 37.3h5M4.699999999999999 46.31L8.5 42.88M25.3 46.31L21.5 42.88"/></g></svg>
  <div class="a" style="left:3078px;top:482.5px;width:31.5px;height:31.5px;border-radius:50%;background:#2f7bd8;"></div>
  <div class="t" style="left:3078px;width:31.5px;text-align:center;top:487px;font-size:20px;font-weight:700;color:#fff;">1</div>
  <svg style="left:3054px;top:557px" width="50" height="48" viewBox="0 0 50 48"><g fill="none" stroke="#858585" stroke-width="3.2" stroke-linejoin="round"><path d="M22 34H5q-2 0-2-2V4q0-2 2-2h36q2 0 2 2v16"/><path d="M14 43h10"/><circle cx="35.4" cy="32.5" r="11.3"/><path d="M30.8 30l3.6 3.8-3.6 3.8M40.4 26.5l-3.6 3.8 3.6 3.8" stroke-width="2.6"/></g></svg>
  <svg style="left:3053px;top:649px" width="49" height="49" viewBox="0 0 49 49"><g fill="none" stroke="#858585" stroke-width="3.2" stroke-linejoin="round"><path d="M2 16h16v30H2zM2 31h31v15H18"/><rect x="29" y="2" width="17" height="17" rx="2"/></g></svg>
  <svg style="left:3053px;top:745px" width="49" height="49" viewBox="0 0 49 49"><g fill="none" stroke="#858585" stroke-width="3"><circle cx="24.5" cy="24.5" r="22.5"/><path d="M20 13v21M20 13l12 14"/></g><g fill="#858585"><circle cx="20" cy="12" r="4.6"/><circle cx="20" cy="35" r="4.6"/><circle cx="32" cy="27" r="4.6"/></g></svg>
  <svg style="left:3053px;top:841px" width="49" height="49" viewBox="0 0 49 49"><g fill="none" stroke="#858585" stroke-width="3"><path d="M46 20A22.5 22.5 0 1 0 26 47"/><path d="M20 13v21M20 13l10 12"/><circle cx="35" cy="35" r="10"/><circle cx="35" cy="35" r="4.5"/><path d="M38.5 38.5l5 5"/></g><g fill="#858585"><circle cx="20" cy="12" r="4.6"/><circle cx="20" cy="35" r="4.6"/></g></svg>
  <svg style="left:3054px;top:937px" width="49" height="51" viewBox="0 0 49 51"><g fill="none" stroke="#858585" stroke-width="3.2" stroke-linejoin="round"><path d="M2 30q3-16 22-16h8V4l15 14-15 14V23h-8q-14 0-22 7z"/><circle cx="20" cy="40" r="8"/></g></svg>
  <svg style="left:3057px;top:1037px" width="42" height="43" viewBox="0 0 42 43"><g fill="none" stroke="#858585" stroke-width="3.2" stroke-linejoin="round"><path d="M14 22H9v6l-6-6H2V2h36v18"/><path d="M16 20h24v16h-3v6l-6-6H16z"/></g></svg>
  <svg style="left:3053px;top:1603px" width="50" height="50" viewBox="0 0 50 50"><g fill="none" stroke="#858585" stroke-width="3.2"><circle cx="25" cy="25" r="22.5"/><circle cx="25" cy="19" r="9"/><path d="M9 41q4-10 16-10t16 10"/></g></svg>
  <svg style="left:3053px;top:1698px" width="50" height="51" viewBox="0 0 50 51"><g fill="none" stroke="#858585" stroke-width="3.2" stroke-linejoin="round"><path d="M21 2h8l1.5 6.5 4 1.7 5.7-3.6 5.6 5.6-3.6 5.7 1.7 4L50 23.5v8l-6.5 1.5-1.7 4 3.6 5.7-5.6 5.6-5.7-3.6-4 1.7L28.5 49h-8l-1.5-6.5-4-1.7-5.7 3.6-5.6-5.6 3.6-5.7-1.7-4L0 31.5v-8l6.5-1.5 1.7-4-3.6-5.7 5.6-5.6 5.7 3.6 4-1.7z" transform="translate(0 -0.5) scale(0.96) translate(1 1)"/><circle cx="25" cy="25.5" r="6"/></g></svg>
  </div>

  <!-- ============ STATUS BAR ============ -->
  <div id="status">
  <div class="a" style="left:112px;top:1774px;width:3014px;height:42px;background:#181818;"></div>
  <div class="a" style="left:112px;top:1772px;width:3014px;height:2px;background:#2b2b2b;"></div>
  
  <svg style="left:197px;top:1781px" width="25" height="27" viewBox="0 0 25 27"><g fill="none" stroke="#cccccc" stroke-width="2"><circle cx="5" cy="5" r="3.8"/><circle cx="5" cy="21" r="3.8"/><circle cx="20" cy="12" r="3.8"/><path d="M5 9v8M12 2v24M20 16q0 6-8 6"/></g></svg>
  <svg style="left:257px;top:1781px" width="26" height="26" viewBox="0 0 26 26"><g fill="none" stroke="#cccccc" stroke-width="2"><circle cx="13" cy="13" r="11.5"/><path d="M8.5 8.5l9 9M17.5 8.5l-9 9"/></g></svg>
  <div class="t" style="left:291px;top:1781.75px;font-size:25px;color:#cccccc;">0</div>
  <svg style="left:314px;top:1781px" width="26" height="25" viewBox="0 0 26 25"><g fill="none" stroke="#cccccc" stroke-width="2" stroke-linejoin="round"><path d="M13 1.5L24.5 23.5h-23z"/><path d="M13 8.5v8"/></g><circle cx="13" cy="19.5" r="1.3" fill="#cccccc"/></svg>
  <div class="t" style="left:348px;top:1781.75px;font-size:25px;color:#cccccc;">0</div>
  <svg style="left:397px;top:1781px" width="25" height="26" viewBox="0 0 25 26"><g fill="none" stroke="#cccccc" stroke-width="2"><path d="M5 2q-6 7 0 14M20 2q6 7 0 14M8.5 5q-3 4 0 8M16.5 5q3 4 0 8"/><circle cx="12.5" cy="9" r="2"/><path d="M12.5 11l-6 14M12.5 11l6 14M9 19h7"/></g></svg>
  <div class="t" style="left:430px;top:1781.75px;font-size:25px;color:#cccccc;">0</div>
  <svg style="left:475px;top:1781px" width="28" height="28" viewBox="0 0 28 28"><g fill="none" stroke="#cccccc" stroke-width="2"><path d="M11 12V1l16 10-9 5"/><ellipse cx="8" cy="20" rx="3.8" ry="5.6"/><path d="M4.2 17.872h7.6M1.9600000000000004 14.68L4.5 16.64M14.040000000000001 14.68L11.5 16.64M1.0 20.3h3.2M11.8 20.3h3.2M1.9600000000000004 25.32L4.5 23.36M14.040000000000001 25.32L11.5 23.36"/></g></svg>
  <svg style="left:536px;top:1782px" width="29" height="24" viewBox="0 0 29 24"><g fill="none" stroke="#cccccc" stroke-width="2"><path d="M4 10A10.5 10.5 0 0 1 24 8.5M25 14A10.5 10.5 0 0 1 5 15.5"/><path d="M20 8.5h5v-5M9 15.5H4v5"/></g></svg>
  <svg style="left:597px;top:1781px" width="28" height="28" viewBox="0 0 28 28"><g fill="none" stroke="#cccccc" stroke-width="2" stroke-linejoin="round"><path d="M1.5 17q1-9 12-9h4V2l9 8.5-9 8.5v-6h-4q-8 0-12 4z"/><circle cx="11" cy="22" r="4"/></g></svg>
  <div class="t" style="left:632px;top:1782.35px;font-size:24.3px;color:#cccccc;">Live Share</div>
  <div class="t" style="left:2197px;top:1781.49px;font-size:25.3px;color:#cccccc;">Ln 11, Col 1</div>
  <div class="t" style="left:2367px;top:1782.17px;font-size:24.5px;color:#cccccc;">Spaces: 2</div>
  <div class="t" style="left:2510.5px;top:1781.58px;font-size:25.2px;color:#cccccc;">UTF-8</div>
  <div class="t" style="left:2616px;top:1781.75px;font-size:25px;color:#cccccc;">LF</div>
  <svg style="left:2673px;top:1784px" width="23" height="22" viewBox="0 0 23 22"><g fill="none" stroke="#cccccc" stroke-width="1.7" stroke-linecap="round"><path d="M7 1.2Q3.5 1.2 3.5 4.5V8Q3.5 11 1 11Q3.5 11 3.5 14V17.5Q3.5 20.8 7 20.8"/><path d="M16 1.2Q19.5 1.2 19.5 4.5V8Q19.5 11 22 11Q19.5 11 19.5 14V17.5Q19.5 20.8 16 20.8"/></g></svg>
  <div class="t" style="left:2711px;top:1781.66px;font-size:25.1px;color:#cccccc;">JavaScript</div>
  <svg style="left:2856px;top:1782px" width="31" height="26" viewBox="0 0 31 26"><g fill="none" stroke="#cccccc" stroke-width="2.4"><path d="M6.5 10Q5 2 11 2q3.5 0 4.5 3.5Q16.5 2 20 2q6 0 4.5 8"/><path d="M8 11q-2 -3 2-3h3q3 0 2.5 3M16 11q-.5-3 2.5-3h3q4 0 2 3"/></g><path d="M2.5 14q0-4 4-4h18q4 0 4 4v3.5Q25 25 15.5 25T2.5 17.5z" fill="#cccccc"/><g fill="#181818"><rect x="10" y="15" width="2.6" height="5" rx="1.2"/><rect x="18.4" y="15" width="2.6" height="5" rx="1.2"/></g></svg>
  <svg style="left:2916px;top:1786px" width="30" height="18" viewBox="0 0 30 18"><g fill="none" stroke="#cccccc" stroke-width="2"><path d="M1 9l6 7 13-15M10 14l2 2 15-15"/></g></svg>
  <div class="t" style="left:2953px;top:1781.33px;font-size:25.5px;color:#cccccc;">Prettier</div>
  <svg style="left:3070px;top:1781px" width="24" height="27" viewBox="0 0 24 27"><g fill="none" stroke="#cccccc" stroke-width="2" stroke-linejoin="round"><path d="M3 20V11a9 9 0 0 1 18 0v9l2 2H1z"/><path d="M9 23.5a3 3 0 0 0 6 0"/></g></svg>
  </div>
</div>
<!-- window border -->
<div class="a" style="left:112px;top:76px;width:3014px;height:1740px;box-sizing:border-box;border:2px solid #5b5b5b;border-radius:20px;"></div>
<div class="a" style="left:112px;top:1774px;width:68px;height:42px;background:#2d7bd6;border-bottom-left-radius:20px;box-shadow:inset 2px -2px 0 #5a9fe9;"></div><svg style="left:137px;top:1781px" width="19" height="25" viewBox="0 0 19 25"><path d="M1 8l8 8-8 8M18 1l-8 8 8 8" fill="none" stroke="#fff" stroke-width="2"/></svg>
</body></html>
